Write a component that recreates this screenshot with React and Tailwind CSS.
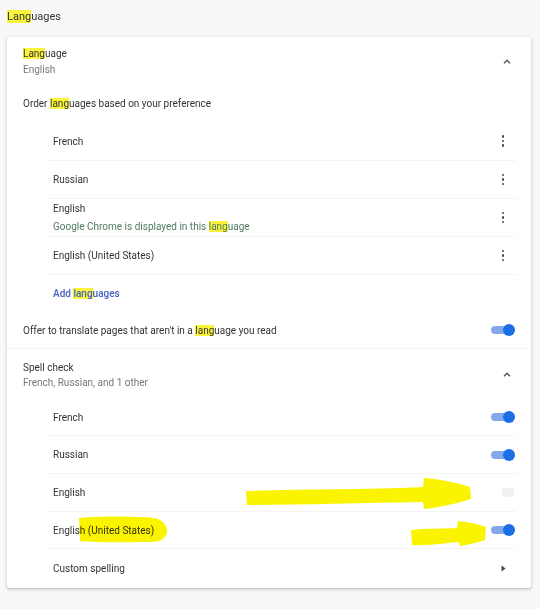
import React from 'react';

const Hl = ({ children }) => <span className="bg-[#fbf43c]">{children}</span>;

function Toggle({ on = true }) {
  if (!on) {
    return (
      <div className="w-[24px] flex justify-end pr-[1px]">
        <div className="w-[12px] h-[9px] rounded-[3px] bg-[#f0f1f3]" />
      </div>
    );
  }
  return (
    <div className="relative w-[24px] h-[12px] flex items-center">
      <div className="w-[21px] h-[8px] rounded-full bg-[#86a8ea]" />
      <div className="absolute right-0 top-0 w-[12px] h-[12px] rounded-full bg-[#1a6ee6]" />
    </div>
  );
}

function Dots() {
  return (
    <div className="w-[24px] flex flex-col items-center gap-[2px]">
      <div className="w-[2.5px] h-[2.5px] rounded-full bg-[#4a4a4a]" />
      <div className="w-[2.5px] h-[2.5px] rounded-full bg-[#4a4a4a]" />
      <div className="w-[2.5px] h-[2.5px] rounded-full bg-[#4a4a4a]" />
    </div>
  );
}

function ChevronUp() {
  return (
    <svg width="10" height="7" viewBox="0 0 10 7" className="mr-[3px]">
      <path d="M2 5.3 L5 2.3 L8 5.3" stroke="#555" strokeWidth="1.4" fill="none" />
    </svg>
  );
}

function SubRow({ children, right, h = 'h-[38px]', border = true }) {
  return (
    <div className={`${h} flex items-center justify-between pl-[5px] pr-[1px] ${border ? 'border-b border-[#f4f4f4]' : ''}`}>
      <div className="text-[10px] text-[#333] pt-[1px]">{children}</div>
      {right}
    </div>
  );
}

export default function App() {
  return (
    <div className="relative w-[540px] h-[609px] bg-[#f7f8f9] font-['Roboto',sans-serif] text-[#333] leading-none">
      {/* Header */}
      <div className="h-[37px] pl-[7px] pb-[4px] flex items-center text-[11px] text-[#333]">
        <span><Hl>Lang</Hl>uages</span>
      </div>

      {/* Card */}
      <div className="ml-[7px] w-[524px] bg-white rounded-[2px] shadow-[0_1px_2px_rgba(60,64,67,0.25),0_1px_3px_1px_rgba(60,64,67,0.1)]">
        {/* Language */}
        <div className="h-[48px] flex items-center justify-between pl-[16px] pr-[16px]">
          <div className="text-[10px] pt-[2px]">
            <div className="leading-[16px] text-[#333]"><Hl>Lang</Hl>uage</div>
            <div className="leading-[16px] text-[#777]">English</div>
          </div>
          <ChevronUp />
        </div>

        <div className="h-[37px] flex items-center pl-[16px] pt-[1px] text-[10px] text-[#333]">
          <span>Order <Hl>lang</Hl>uages based on your preference</span>
        </div>

        <div className="ml-[41px] mr-[15px]">
          <SubRow h="h-[39px]" right={<Dots />}>French</SubRow>
          <SubRow right={<Dots />}>Russian</SubRow>
          <SubRow right={<Dots />}>
            <div className="leading-[18px]">English</div>
            <div className="leading-[18px] text-[#4f7a60]">Google Chrome is displayed in this <Hl>lang</Hl>uage</div>
          </SubRow>
          <SubRow right={<Dots />}>English (United States)</SubRow>
          <div className="h-[37px] flex items-center pl-[5px] pt-[1px] text-[10px] text-[#4363c0] font-medium">
            <span>Add <Hl>lang</Hl>uages</span>
          </div>
        </div>

        <div className="h-[37px] flex items-center justify-between pl-[16px] pr-[16px] border-b border-[#f4f4f4]">
          <span className="text-[10px] text-[#333] pt-[2px]">Offer to translate pages that aren't in a <Hl>lang</Hl>uage you read</span>
          <Toggle />
        </div>

        <div className="h-[50px] flex items-center justify-between pl-[16px] pr-[16px]">
          <div className="text-[10px] pt-[1px]">
            <div className="leading-[15px] text-[#333]">Spell check</div>
            <div className="leading-[15px] text-[#777]">French, Russian, and 1 other</div>
          </div>
          <ChevronUp />
        </div>

        <div className="ml-[41px] mr-[15px]">
          <SubRow h="h-[37px]" right={<Toggle />}>French</SubRow>
          <SubRow right={<Toggle />}>Russian</SubRow>
          <SubRow right={<Toggle on={false} />}>English</SubRow>
          <SubRow h="h-[37px]" right={<Toggle />}>English (United States)</SubRow>
          <SubRow
            h="h-[39px]"
            border={false}
            right={
              <div className="w-[24px] flex justify-center">
                <svg width="5" height="7" viewBox="0 0 5 7"><path d="M0.5 0.5 L4.5 3.5 L0.5 6.5 Z" fill="#444" /></svg>
              </div>
            }
          >
            Custom spelling
          </SubRow>
        </div>
      </div>

      {/* hand-drawn marker annotations */}
      <svg className="absolute left-0 top-0 pointer-events-none mix-blend-multiply" width="540" height="609" viewBox="0 0 540 609">
        <g fill="#fbf400">
          <path d="M246 491 C300 489 360 490 423 487 L424 478 C440 479 458 483 470 487 L471 499 C458 503 442 507 424 509 L423 502 C360 503 300 505 247 505 Z" />
          <path d="M411 530 C425 528 440 529 457 528 L458 521 C468 522 478 524 486 527 L485 540 C476 543 467 545 460 546 L459 542 C445 543 428 546 412 545 Z" />
          <path d="M79 518 C100 516 130 516 155 518 C163 520 168 526 167 533 C165 540 158 542 150 542 C125 542 100 543 80 541 Z" />
        </g>
      </svg>
    </div>
  );
}
